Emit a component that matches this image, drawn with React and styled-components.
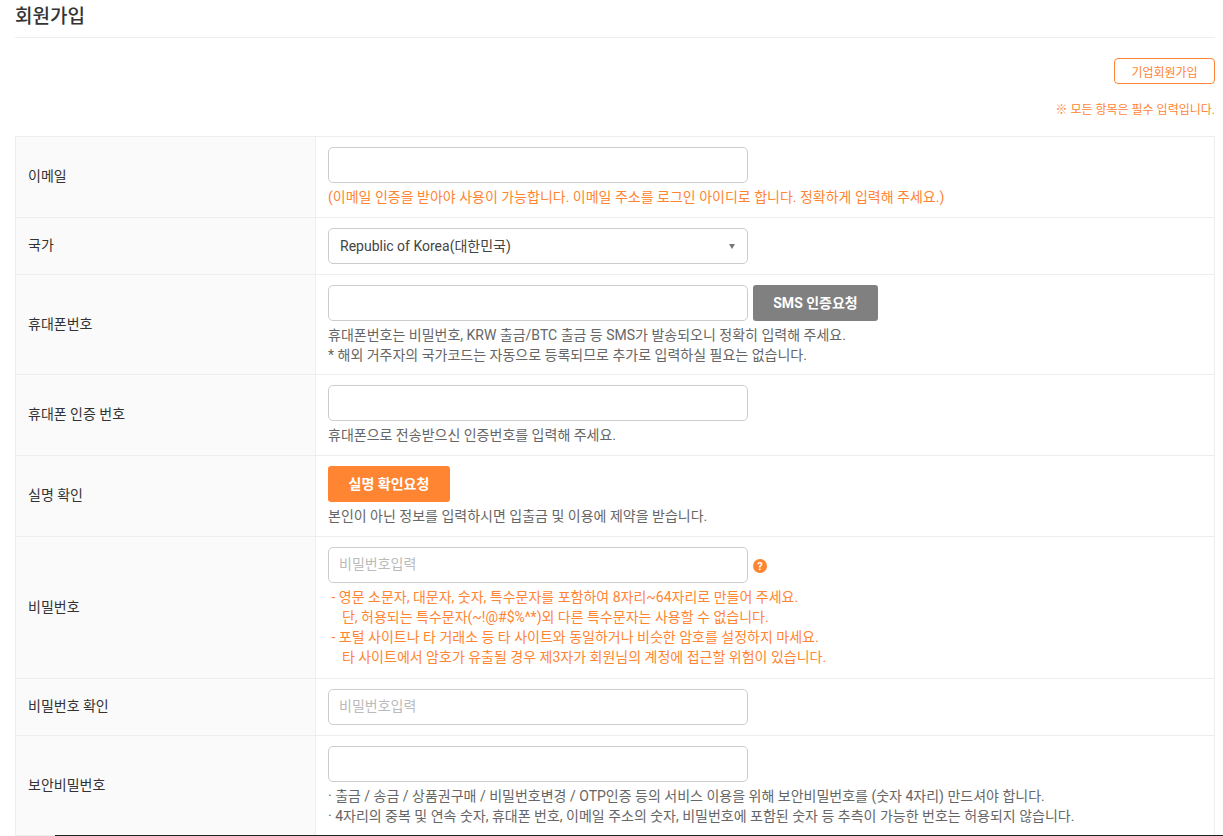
import React from "react";
import styled, { createGlobalStyle } from "styled-components";

const Global = createGlobalStyle`
  html, body { margin: 0; padding: 0; height: 100%; overflow: hidden; background: #fff; }
  body { font-family: Roboto, "Noto Sans CJK KR", sans-serif; font-size: 14px; color: #333; }
  * { box-sizing: border-box; }
`;

const Page = styled.div`
  padding: 0 8px 0 15px;
`;
const Title = styled.h2`
  margin: 0;
  height: 38px;
  padding-top: 4px;
  border-bottom: 1px solid #eee;
  font-size: 19px;
  line-height: 26px;
  font-weight: 500;
  color: #333;
`;
const TopActions = styled.div`
  display: flex;
  flex-direction: column;
  align-items: flex-end;
  padding-top: 20px;
  height: 98px;
`;
const OutlineButton = styled.button`
  width: 101px;
  height: 26px;
  background: #fff;
  border: 1px solid #ff8533;
  border-radius: 4px;
  color: #ff8533;
  font: 400 12px Roboto, "Noto Sans CJK KR", sans-serif;
  padding: 0;
`;
const Required = styled.p`
  margin: 17px 0 0;
  font-size: 12px;
  line-height: 18px;
  color: #ff8533;
`;
const Table = styled.div`
  border: 1px solid #eee;
  border-bottom: 0;
`;
const Row = styled.div`
  display: grid;
  grid-template-columns: 300px 1fr;
  min-height: ${(p) => p.$h}px;
  border-bottom: 1px solid #eee;
`;
const Label = styled.div`
  display: flex;
  align-items: center;
  padding: 0 0 4px 12px;
  background: #fafafa;
  border-right: 1px solid #eee;
  font-size: 14px;
  color: #333;
`;
const Cell = styled.div`
  padding: 10px 12px 0;
`;
const FieldLine = styled.div`
  display: flex;
  align-items: center;
  gap: 5px;
`;
const Input = styled.input`
  display: block;
  width: 420px;
  height: 36px;
  border: 1px solid #ccc;
  border-radius: 5px;
  padding: 0 0 3px 10px;
  background: #fff;
  font: 400 14px Roboto, "Noto Sans CJK KR", sans-serif;
  &::placeholder { color: #bbb; opacity: 1; }
`;
const SelectBox = styled.div`
  display: flex;
  align-items: center;
  justify-content: space-between;
  width: 420px;
  height: 36px;
  border: 1px solid #ccc;
  border-radius: 5px;
  padding: 0 12px 3px 11px;
  font-size: 14px;
  color: #444;
`;
const Caret = styled.span`
  width: 0;
  height: 0;
  margin-top: 3px;
  border-left: 3px solid transparent;
  border-right: 3px solid transparent;
  border-top: 5px solid #777;
`;
const SolidButton = styled.button`
  width: ${(p) => p.$w}px;
  height: 36px;
  border: 0;
  border-radius: 3px;
  background: ${(p) => p.$bg};
  color: #fff;
  font: 700 14px Roboto, "Noto Sans CJK KR", sans-serif;
  padding: 0 0 3px;
  display: block;
`;
const Help = styled.div`
  margin-top: ${(p) => p.$mt ?? 0}px;
  font-size: 14px;
  line-height: 20px;
  color: ${(p) => p.$orange ? "#ff8533" : "#666"};
  white-space: pre;
`;
const HelpIcon = styled.span`
  display: inline-flex;
  align-items: center;
  justify-content: center;
  width: 14px;
  height: 14px;
  margin-top: 2px;
  border-radius: 50%;
  background: #ff8533;
  color: #fff;
  font-size: 11px;
  font-weight: 700;
`;
const BottomBar = styled.div`
  position: fixed;
  left: 55px;
  right: 0;
  bottom: 0;
  height: 1px;
  background: #222;
`;

export default function App() {
  return (
    <>
      <Global />
      <Page>
        <Title>회원가입</Title>
        <TopActions>
          <OutlineButton>기업회원가입</OutlineButton>
          <Required>※ 모든 항목은 필수 입력입니다.</Required>
        </TopActions>
        <Table>
          <Row $h={81}>
            <Label>이메일</Label>
            <Cell>
              <Input />
              <Help $orange $mt={4}>(이메일 인증을 받아야 사용이 가능합니다. 이메일 주소를 로그인 아이디로 합니다. 정확하게 입력해 주세요.)</Help>
            </Cell>
          </Row>
          <Row $h={57}>
            <Label>국가</Label>
            <Cell>
              <SelectBox>Republic of Korea(대한민국)<Caret /></SelectBox>
            </Cell>
          </Row>
          <Row $h={100}>
            <Label>휴대폰번호</Label>
            <Cell>
              <FieldLine>
                <Input />
                <SolidButton $w={125} $bg="#808080">SMS 인증요청</SolidButton>
              </FieldLine>
              <Help $mt={4}>휴대폰번호는 비밀번호, KRW 출금/BTC 출금 등 SMS가 발송되오니 정확히 입력해 주세요.</Help>
              <Help>* 해외 거주자의 국가코드는 자동으로 등록되므로 추가로 입력하실 필요는 없습니다.</Help>
            </Cell>
          </Row>
          <Row $h={81}>
            <Label>휴대폰 인증 번호</Label>
            <Cell>
              <Input />
              <Help $mt={4}>휴대폰으로 전송받으신 인증번호를 입력해 주세요.</Help>
            </Cell>
          </Row>
          <Row $h={81}>
            <Label>실명 확인</Label>
            <Cell>
              <SolidButton $w={122} $bg="#ff8533">실명 확인요청</SolidButton>
              <Help $mt={4}>본인이 아닌 정보를 입력하시면 입출금 및 이용에 제약을 받습니다.</Help>
            </Cell>
          </Row>
          <Row $h={142}>
            <Label>비밀번호</Label>
            <Cell>
              <FieldLine>
                <Input placeholder="비밀번호입력" />
                <HelpIcon>?</HelpIcon>
              </FieldLine>
              <Help $orange $mt={4}>{" - 영문 소문자, 대문자, 숫자, 특수문자를 포함하여 8자리~64자리로 만들어 주세요."}</Help>
              <Help $orange>{"    단, 허용되는 특수문자(~!@#$%^*)외 다른 특수문자는 사용할 수 없습니다."}</Help>
              <Help $orange>{" - 포털 사이트나 타 거래소 등 타 사이트와 동일하거나 비슷한 암호를 설정하지 마세요."}</Help>
              <Help $orange>{"    타 사이트에서 암호가 유출될 경우 제3자가 회원님의 계정에 접근할 위험이 있습니다."}</Help>
            </Cell>
          </Row>
          <Row $h={57}>
            <Label>비밀번호 확인</Label>
            <Cell>
              <Input placeholder="비밀번호입력" />
            </Cell>
          </Row>
          <Row $h={100}>
            <Label>보안비밀번호</Label>
            <Cell>
              <Input />
              <Help $mt={4}>· 출금 / 송금 / 상품권구매 / 비밀번호변경 / OTP인증 등의 서비스 이용을 위해 보안비밀번호를 (숫자 4자리) 만드셔야 합니다.</Help>
              <Help>· 4자리의 중복 및 연속 숫자, 휴대폰 번호, 이메일 주소의 숫자, 비밀번호에 포함된 숫자 등 추측이 가능한 번호는 허용되지 않습니다.</Help>
            </Cell>
          </Row>
        </Table>
      </Page>
      <BottomBar />
    </>
  );
}
